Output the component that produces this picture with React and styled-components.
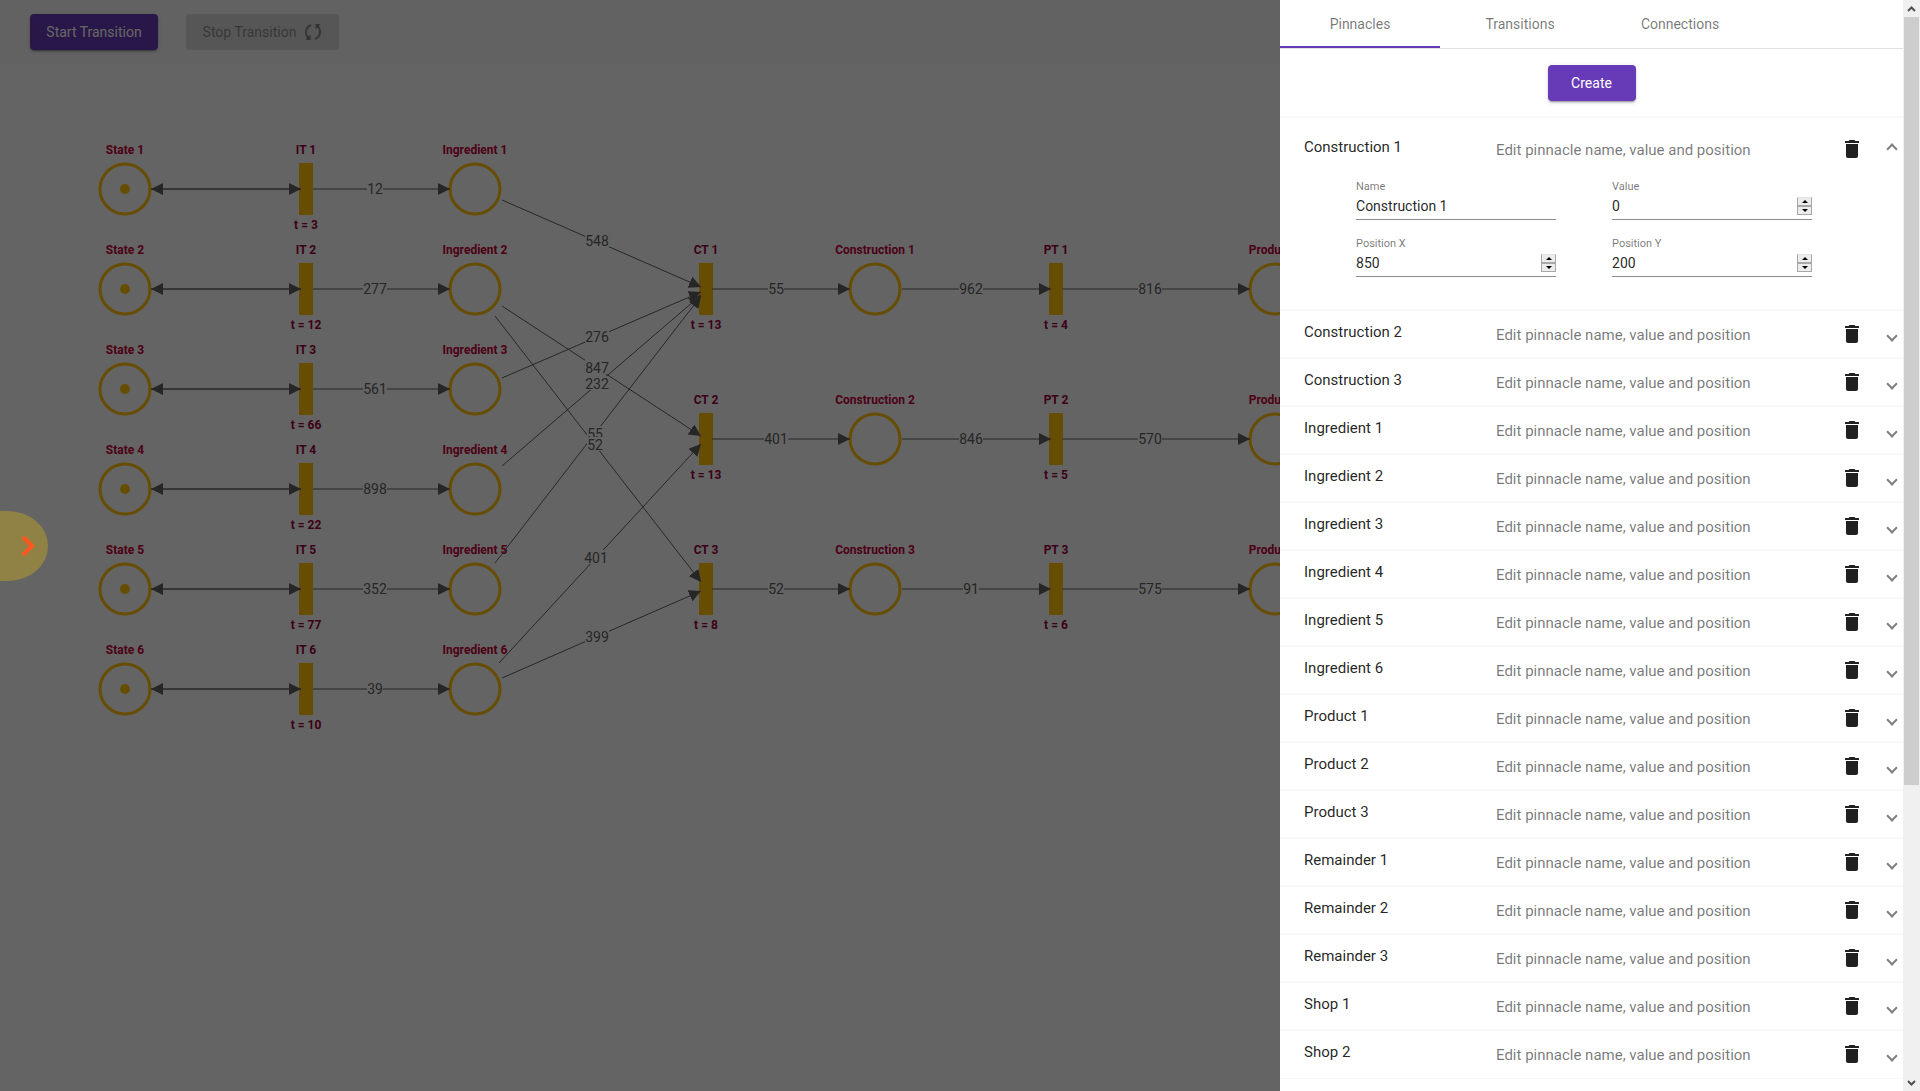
import React, { useState } from "react";
import styled, { createGlobalStyle } from "styled-components";

const GlobalStyle = createGlobalStyle`
  * { box-sizing: border-box; }
  body {
    margin: 0;
    background: #fafafa;
    color: rgba(0, 0, 0, 0.87);
    font-family: Roboto, "Liberation Sans", sans-serif;
    font-size: 14px;
  }
  button, input { font-family: inherit; }
`;

const Page = styled.div`
  height: 100vh;
  overflow: hidden;
  display: flex;
  flex-direction: column;
`;

const Toolbar = styled.header`
  display: flex;
  align-items: center;
  gap: 28px;
  padding: 14px 30px;
  background: #f5f5f5;
`;

const Button = styled.button`
  display: inline-flex;
  align-items: center;
  justify-content: center;
  gap: 8px;
  height: 36px;
  min-width: ${(p) => p.$width}px;
  padding: 0 16px;
  border: 0;
  border-radius: 4px;
  font-size: 14px;
  line-height: 36px;
  color: #fff;
  background: #673ab7;
  box-shadow: 0 3px 1px -2px rgba(0, 0, 0, 0.2), 0 2px 2px 0 rgba(0, 0, 0, 0.14),
    0 1px 5px 0 rgba(0, 0, 0, 0.12);
  &:disabled {
    color: rgba(0, 0, 0, 0.38);
    background: rgba(0, 0, 0, 0.12);
    box-shadow: none;
  }
`;

const Canvas = styled.svg`
  flex: 1;
  width: 100%;
  min-height: 0;
  display: block;
`;

const NodeLabel = styled.text`
  font-size: 12px;
  font-weight: 700;
  text-anchor: middle;
  fill: ${(p) => (p.$bar ? "#960040" : "#c00039")};
`;

const EdgeLabel = styled.text`
  font-size: 14px;
  text-anchor: middle;
  fill: #606060;
`;

const Backdrop = styled.div`
  position: fixed;
  inset: 0;
  background: rgba(0, 0, 0, 0.6);
`;

const Knob = styled.button`
  position: fixed;
  left: 0;
  top: 511px;
  width: 48px;
  height: 70px;
  padding: 0 13px 0 0;
  border: 0;
  border-radius: 0 40px 40px 0 / 0 35px 35px 0;
  background: #908145;
  display: flex;
  align-items: center;
  justify-content: flex-end;
`;

const Drawer = styled.aside`
  position: fixed;
  top: 0;
  right: 0;
  bottom: 0;
  width: 33.3333%;
  display: flex;
  background: #fff;
`;

const DrawerContent = styled.div`
  flex: 1;
  min-width: 0;
  overflow: hidden;
`;

const Tabs = styled.nav`
  display: flex;
  border-bottom: 1px solid #e0e0e0;
`;

const Tab = styled.button`
  width: 160px;
  height: 48px;
  padding: 2px 0 0;
  border: 0;
  border-bottom: 2px solid ${(p) => (p.$active ? "#673ab7" : "transparent")};
  background: none;
  font-size: 14px;
  line-height: 44px;
  color: rgba(0, 0, 0, 0.54);
`;

const Actions = styled.div`
  display: flex;
  justify-content: center;
  padding: 16px;
`;

const List = styled.div`
  border-bottom: 1px solid #f7f7f7;
`;

const Panel = styled.section`
  border-top: 1px solid #f7f7f7;
  box-shadow: 0 -1px 1px rgba(0, 0, 0, 0.02);
`;

const PanelHeader = styled.div`
  display: flex;
  align-items: center;
  height: ${(p) => (p.$open ? 63 : 47)}px;
  padding: 0 7px 2px 24px;
  font-size: 15px;
  line-height: 20px;
`;

const Title = styled.span`
  width: 192px;
  padding-bottom: 4px;
`;

const Description = styled.span`
  flex: 1;
  padding-top: 2px;
  color: rgba(0, 0, 0, 0.54);
`;

const IconButton = styled.button`
  display: flex;
  padding: 0;
  border: 0;
  background: none;
  color: #212121;
`;

const Toggle = styled.button`
  width: 8px;
  height: 8px;
  margin: ${(p) => (p.$open ? 0 : 4)}px 0 0 24px;
  padding: 0;
  border: solid #808080;
  border-width: 0 2px 2px 0;
  background: none;
  transform: rotate(${(p) => (p.$open ? 225 : 45)}deg);
`;

const Fields = styled.form`
  display: grid;
  grid-template-columns: 200px 200px;
  gap: 18px 56px;
  padding: 0 24px 33px 76px;
`;

const Field = styled.label`
  display: block;
  border-bottom: 1px solid #8c8c8c;
`;

const FieldName = styled.span`
  display: block;
  font-size: 11px;
  line-height: 12px;
  color: rgba(0, 0, 0, 0.54);
`;

const FieldRow = styled.span`
  display: flex;
  align-items: center;
  height: 26px;
`;

const Input = styled.input`
  flex: 1;
  min-width: 0;
  height: 20px;
  padding: 0;
  border: 0;
  outline: 0;
  background: none;
  font-size: 14px;
  color: rgba(0, 0, 0, 0.87);
  appearance: textfield;
  &::-webkit-inner-spin-button { appearance: none; margin: 0; }
`;

const Spinner = styled.span`
  display: flex;
  flex-direction: column;
  width: 15px;
  height: 18px;
  border: 1px solid #a8a8a8;
  border-top-color: #e3e3e3;
`;

const SpinButton = styled.button`
  flex: 1;
  display: flex;
  align-items: center;
  justify-content: center;
  padding: 0;
  border: 0;
  border-bottom: ${(p) => (p.$up ? "2px solid #a8a8a8" : "0")};
  background: #ececec;
`;

const Scrollbar = styled.div`
  flex: none;
  width: 17px;
  display: flex;
  flex-direction: column;
  align-items: center;
  background: #f0f0f0;
`;

const ScrollArrow = styled.div`
  display: flex;
  align-items: center;
  justify-content: center;
  height: 17px;
`;

const Track = styled.div`
  flex: 1;
  width: 15px;
`;

const Thumb = styled.div`
  height: 72.7%;
  background: #cdcdcd;
`;

const HALF = 26;

const rows = [189, 289, 389, 489, 589, 689];
const itTimes = [3, 12, 66, 22, 77, 10];
const itWeights = [12, 277, 561, 898, 352, 39];
const lines = [
  { y: 289, ct: 13, a: 55, b: 962, pt: 4, c: 816 },
  { y: 439, ct: 13, a: 401, b: 846, pt: 5, c: 570 },
  { y: 589, ct: 8, a: 52, b: 91, pt: 6, c: 575 },
];

const straight = [
  ...rows.map((y, i) => ({ x1: 313, y1: y, x2: 450, y2: y, text: itWeights[i], lx: 375 })),
  ...lines.flatMap(({ y, a, b, c }) => [
    { x1: 712, y1: y, x2: 850, y2: y, text: a, lx: 776 },
    { x1: 902, y1: y, x2: 1051, y2: y, text: b, lx: 971 },
    { x1: 1062, y1: y, x2: 1250, y2: y, text: c, lx: 1150 },
  ]),
];

const crossing = [
  { x1: 502, y1: 200, x2: 701, y2: 287, text: 548, lx: 597, ly: 241 },
  { x1: 502, y1: 306, x2: 701, y2: 436, text: 847, lx: 597, ly: 368 },
  { x1: 502, y1: 378, x2: 701, y2: 292, text: 276, lx: 597, ly: 337 },
  { x1: 502, y1: 466, x2: 701, y2: 295, text: 232, lx: 597, ly: 384 },
  { x1: 495, y1: 563, x2: 701, y2: 296, text: 55, lx: 595, ly: 434 },
  { x1: 495, y1: 316, x2: 701, y2: 582, text: 52, lx: 595, ly: 445 },
  { x1: 499, y1: 663, x2: 701, y2: 444, text: 401, lx: 596, ly: 558 },
  { x1: 502, y1: 678, x2: 701, y2: 591, text: 399, lx: 597, ly: 637 },
];

function Arrow({ x1, y1, x2, y2, both }) {
  return (
    <g>
      <line x1={x1} y1={y1} x2={x2} y2={y2} stroke="#606060" markerEnd="url(#head)" />
      {both && <line x1={x2} y1={y2} x2={x1} y2={y1} stroke="#606060" markerEnd="url(#head)" />}
    </g>
  );
}

function WeightLabel({ x, y, children }) {
  const w = String(children).length * 8;
  return (
    <g>
      <rect x={x - w / 2} y={y - 8} width={w} height={14} fill="#fafafa" />
      <EdgeLabel x={x} y={y + 5}>{children}</EdgeLabel>
    </g>
  );
}

function Place({ x, y, name, token }) {
  return (
    <g>
      <circle cx={x} cy={y} r={HALF - 1} fill="none" stroke="#ffc107" strokeWidth="3" />
      {token && <circle cx={x} cy={y} r="5" fill="#ffc107" />}
      <NodeLabel x={x} y={y - 35}>{name}</NodeLabel>
    </g>
  );
}

function Bar({ x, y, name, time }) {
  return (
    <g>
      <rect x={x - 7} y={y - HALF} width="14" height={HALF * 2} fill="#ffc107" />
      <NodeLabel $bar x={x} y={y - 35}>{name}</NodeLabel>
      <NodeLabel $bar x={x} y={y + 40}>{`t = ${time}`}</NodeLabel>
    </g>
  );
}

function Diagram() {
  return (
    <Canvas>
      <defs>
        <marker id="head" viewBox="0 0 12 12" refX="12" refY="6" markerWidth="12" markerHeight="12"
          markerUnits="userSpaceOnUse" orient="auto">
          <path d="M0 0L12 6L0 12z" fill="#606060" />
        </marker>
      </defs>
      <g transform="translate(0 -64)">
        {rows.map((y, i) => (
          <React.Fragment key={y}>
            <Place x={125} y={y} name={`State ${i + 1}`} token />
            <Bar x={306} y={y} name={`IT ${i + 1}`} time={itTimes[i]} />
            <Place x={475} y={y} name={`Ingredient ${i + 1}`} />
            <Arrow x1={151} y1={y} x2={301} y2={y} both />
          </React.Fragment>
        ))}
        {lines.map(({ y, ct, pt }, i) => (
          <React.Fragment key={y}>
            <Bar x={706} y={y} name={`CT ${i + 1}`} time={ct} />
            <Place x={875} y={y} name={`Construction ${i + 1}`} />
            <Bar x={1056} y={y} name={`PT ${i + 1}`} time={pt} />
            <Place x={1275} y={y} name={`Product ${i + 1}`} />
          </React.Fragment>
        ))}
        {[...straight, ...crossing].map((e, i) => <Arrow key={i} {...e} />)}
        {[...straight, ...crossing].map((e, i) => (
          <WeightLabel key={i} x={e.lx} y={e.ly || e.y1}>{e.text}</WeightLabel>
        ))}
      </g>
    </Canvas>
  );
}

function LoopIcon() {
  return (
    <svg width="18" height="18" viewBox="0 0 18 18" fill="none" stroke="currentColor" strokeWidth="2">
      <path d="M7 2C3.500 3.500 1.500 7 2.200 11C2.600 12.800 3.400 14 4.500 15" />
      <path d="M6.500 11.500V17H1.500z" fill="currentColor" stroke="none" />
      <path d="M11 16C14.500 14.500 16.500 11 15.800 7C15.400 5.200 14.600 4 13.500 3" />
      <path d="M11.500 6.500V1H16.500z" fill="currentColor" stroke="none" />
    </svg>
  );
}

function TrashIcon() {
  return (
    <svg width="24" height="24" viewBox="0 0 24 24" fill="currentColor">
      <path d="M6 19c0 1.100.9 2 2 2h8c1.100 0 2-.9 2-2V7H6v12zM19 4h-3.500l-1-1h-5l-1 1H5v2h14V4z" />
    </svg>
  );
}

function Chevron({ down }) {
  return (
    <svg width="9" height="6" viewBox="0 0 9 6" fill="none" stroke="#505050" strokeWidth="2">
      <path d={down ? "M1 1L4.500 4.500L8 1" : "M1 5L4.500 1.500L8 5"} />
    </svg>
  );
}

function NumberField({ name, label, type = "number", initial }) {
  const [value, setValue] = useState(initial);
  const step = (d) => setValue((v) => Number(v) + d);
  return (
    <Field htmlFor={name}>
      <FieldName>{label}</FieldName>
      <FieldRow>
        <Input id={name} type={type} value={value} onChange={(e) => setValue(e.target.value)} />
        {type === "number" && (
          <Spinner>
            <SpinButton $up type="button" aria-label="Increase" onClick={() => step(1)}>
              <svg width="6" height="3" viewBox="0 0 6 3"><path d="M0 3L3 0L6 3z" /></svg>
            </SpinButton>
            <SpinButton type="button" aria-label="Decrease" onClick={() => step(-1)}>
              <svg width="6" height="3" viewBox="0 0 6 3"><path d="M0 0L3 3L6 0z" /></svg>
            </SpinButton>
          </Spinner>
        )}
      </FieldRow>
    </Field>
  );
}

const pinnacles = [
  "Construction 1", "Construction 2", "Construction 3",
  "Ingredient 1", "Ingredient 2", "Ingredient 3", "Ingredient 4", "Ingredient 5", "Ingredient 6",
  "Product 1", "Product 2", "Product 3",
  "Remainder 1", "Remainder 2", "Remainder 3",
  "Shop 1", "Shop 2",
];

export default function App() {
  const [tab, setTab] = useState("Pinnacles");
  const [open, setOpen] = useState("Construction 1");
  return (
    <Page>
      <GlobalStyle />
      <Toolbar>
        <Button $width={128}>Start Transition</Button>
        <Button $width={153} disabled>Stop Transition <LoopIcon /></Button>
      </Toolbar>
      <Diagram />
      <Backdrop />
      <Knob aria-label="Open menu">
        <svg width="14" height="22" viewBox="0 0 14 22" fill="none" stroke="#ff5722" strokeWidth="4">
          <path d="M2 2L11 11L2 20" />
        </svg>
      </Knob>
      <Drawer>
        <DrawerContent>
          <Tabs>
            {["Pinnacles", "Transitions", "Connections"].map((t) => (
              <Tab key={t} $active={t === tab} onClick={() => setTab(t)}>{t}</Tab>
            ))}
          </Tabs>
          <Actions>
            <Button $width={88}>Create</Button>
          </Actions>
          <List>
            {pinnacles.map((name) => (
              <Panel key={name}>
                <PanelHeader $open={name === open}>
                  <Title>{name}</Title>
                  <Description>Edit pinnacle name, value and position</Description>
                  <IconButton aria-label={`Delete ${name}`}><TrashIcon /></IconButton>
                  <Toggle
                    $open={name === open}
                    aria-label={`Toggle ${name}`}
                    onClick={() => setOpen(name === open ? null : name)}
                  />
                </PanelHeader>
                {name === open && (
                  <Fields>
                    <NumberField name="name" label="Name" type="text" initial={name} />
                    <NumberField name="value" label="Value" initial={0} />
                    <NumberField name="x" label="Position X" initial={850} />
                    <NumberField name="y" label="Position Y" initial={200} />
                  </Fields>
                )}
              </Panel>
            ))}
          </List>
        </DrawerContent>
        <Scrollbar>
          <ScrollArrow><Chevron /></ScrollArrow>
          <Track><Thumb /></Track>
          <ScrollArrow><Chevron down /></ScrollArrow>
        </Scrollbar>
      </Drawer>
    </Page>
  );
}
